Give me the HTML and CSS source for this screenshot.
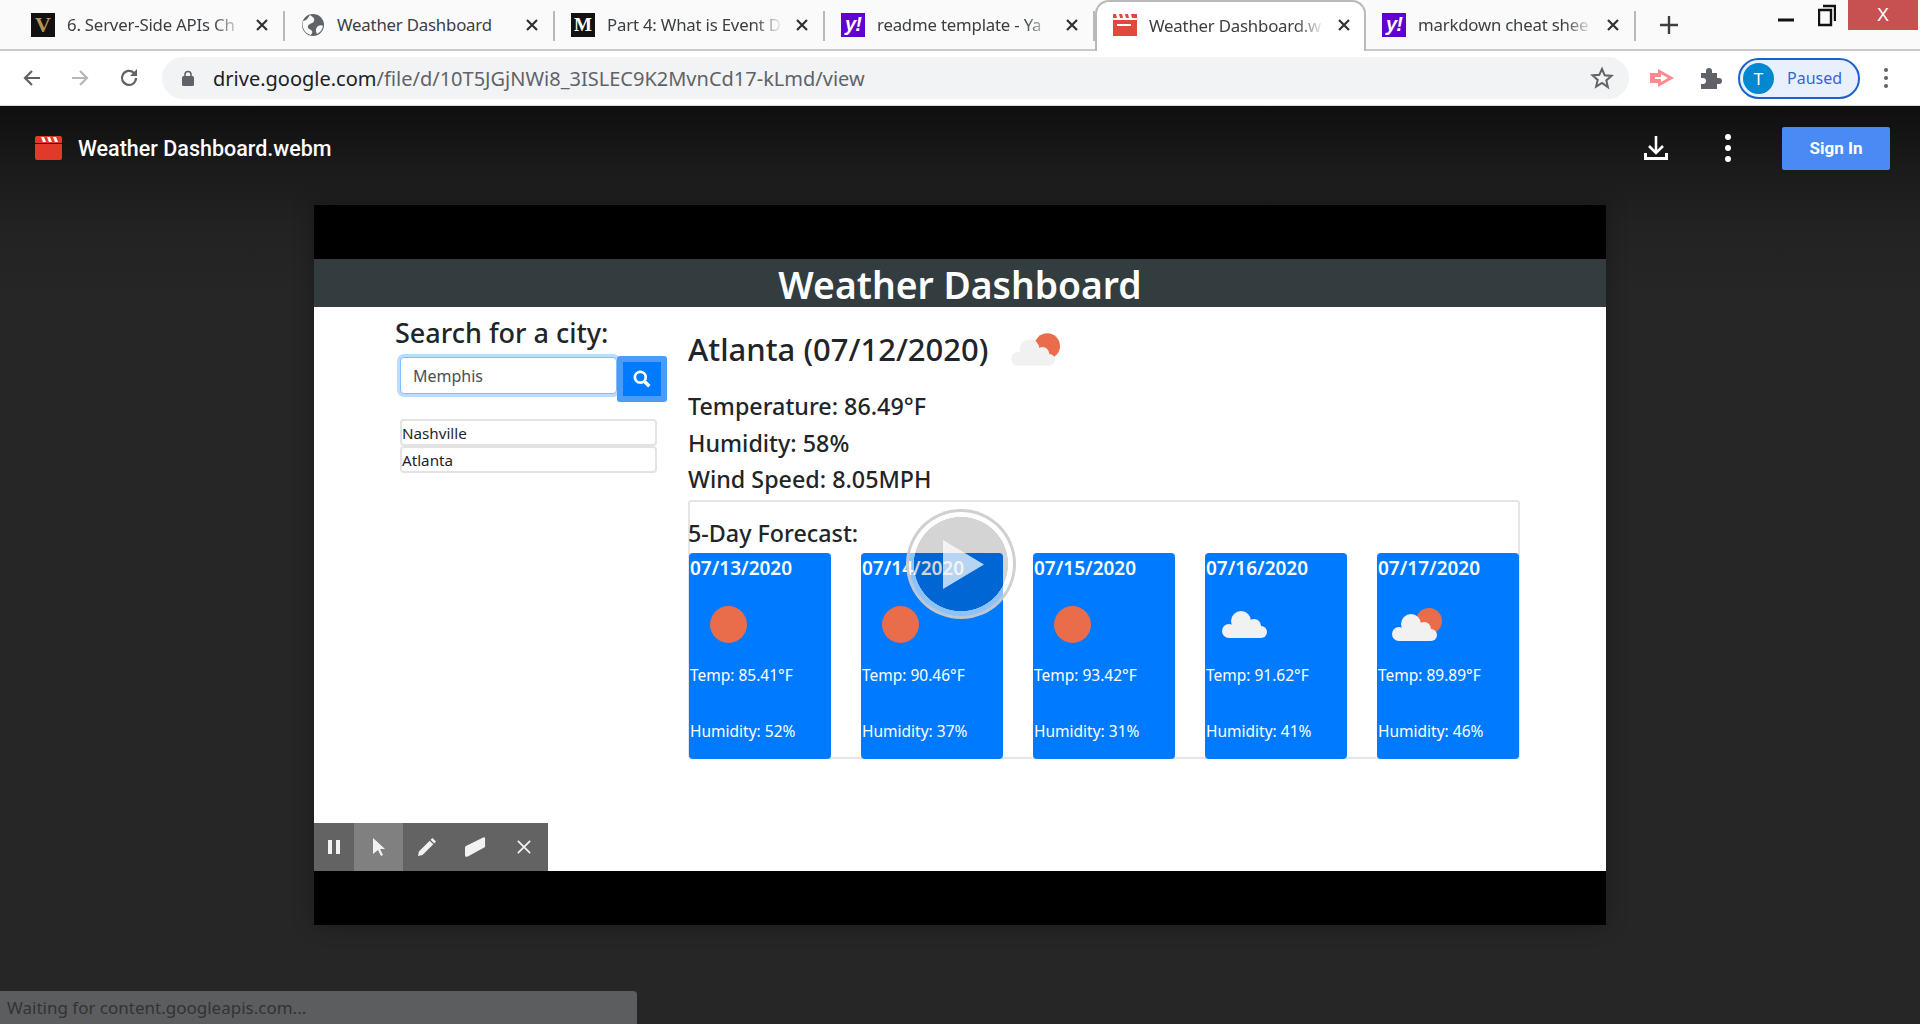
FILE: index.html
```html
<!DOCTYPE html>
<html lang="en">
<head>
<meta charset="UTF-8">
<meta name="viewport" content="width=device-width, initial-scale=1.0">
<title>Weather Dashboard.webm</title>
<link rel="stylesheet" href="styles.css">
</head>
<body>

<svg class="defs" width="0" height="0">
    <symbol id="cloud" viewBox="0 0 45 27">
        <circle cx="19" cy="10" r="10"/>
        <circle cx="32" cy="15" r="7"/>
        <circle cx="7" cy="20" r="7"/>
        <circle cx="39" cy="21" r="6"/>
        <path d="M7 14h32v13H7z"/>
    </symbol>
    <symbol id="clapper" viewBox="0 0 27 24">
        <path d="M2 0h23a2 2 0 0 1 2 2v5H0V2a2 2 0 0 1 2-2zM0 8h27v14a2 2 0 0 1-2 2H2a2 2 0 0 1-2-2z" fill="#e13a2b"/>
        <path d="M6 1h3l2 5H8zM12 1h3l2 5h-3zM18 1h3l2 5h-3z" fill="#fff"/>
    </symbol>
    <symbol id="tab-x" viewBox="0 0 14 14">
        <path d="M2 2l10 10M12 2L2 12" stroke="#2f3133" stroke-width="2.2" fill="none"/>
    </symbol>
</svg>

<div class="tabstrip">
    <div class="tab">
        <span class="fav fav-v">V</span>
        <span class="tab-title">6. Server-Side APIs Ch</span>
        <svg class="tab-close"><use href="#tab-x"/></svg>
    </div>
    <div class="tab">
        <svg class="fav-globe" viewBox="0 0 24 24">
            <circle cx="12" cy="12" r="11" fill="#5f6368"/>
            <path d="M9 2c3 2 5 3 4 6s-5 2-6 5 3 3 4 5-1 3-1 4A11 11 0 0 1 2 8c3 0 5-3 7-6zM17 13c2-1 4-1 5 0a11 11 0 0 1-6 8c-2-3-1-6 1-8z" fill="#fafafa"/>
        </svg>
        <span class="tab-title tab-title-full">Weather Dashboard</span>
        <svg class="tab-close"><use href="#tab-x"/></svg>
    </div>
    <div class="tab">
        <span class="fav fav-m">M</span>
        <span class="tab-title">Part 4: What is Event D</span>
        <svg class="tab-close"><use href="#tab-x"/></svg>
    </div>
    <div class="tab">
        <span class="fav fav-y">y!</span>
        <span class="tab-title">readme template - Ya</span>
        <svg class="tab-close"><use href="#tab-x"/></svg>
    </div>
    <div class="tab tab-active">
        <svg class="fav-clapper" viewBox="0 0 24 22">
            <path d="M0 0h24v4H0zM0 6h24v16H0z" fill="#e04a39"/>
            <path d="M3 0h3l1 4H4zM9 0h3l1 4h-3zM15 0h3l1 4h-3zM4 10h14v2H4z" fill="#fff"/>
        </svg>
        <span class="tab-title">Weather Dashboard.w</span>
        <svg class="tab-close"><use href="#tab-x"/></svg>
    </div>
    <div class="tab">
        <span class="fav fav-y">y!</span>
        <span class="tab-title">markdown cheat shee</span>
        <svg class="tab-close"><use href="#tab-x"/></svg>
    </div>
    <svg class="new-tab" viewBox="0 0 18 18"><path d="M9 0v18M0 9h18" stroke="#3c4043" stroke-width="2.4"/></svg>
    <div class="win-controls">
        <svg class="win-min" viewBox="0 0 16 16"><path d="M0 8h16" stroke="#111" stroke-width="3"/></svg>
        <svg class="win-max" viewBox="0 0 18 24"><path d="M5 3h12v15M1 7h12v15H1z" stroke="#111" stroke-width="2.4" fill="none"/></svg>
        <div class="win-close">X</div>
    </div>
</div>

<div class="toolbar">
    <svg class="nav-icon" viewBox="0 0 20 20"><path d="M18 10H3M10 3l-7 7 7 7" stroke="#5f6368" stroke-width="2.2" fill="none"/></svg>
    <svg class="nav-icon" viewBox="0 0 20 20"><path d="M2 10h15M10 3l7 7-7 7" stroke="#b5b8bb" stroke-width="2.2" fill="none"/></svg>
    <svg class="nav-icon" viewBox="0 0 20 20"><path d="M17 10a7 7 0 1 1-2-5" stroke="#5f6368" stroke-width="2.2" fill="none"/><path d="M18 1v7h-7z" fill="#5f6368"/></svg>
    <div class="omnibox">
        <svg class="lock" viewBox="0 0 12 16"><path d="M3 7V4.500a3 3 0 0 1 6 0V7" stroke="#5f6368" stroke-width="1.600" fill="none"/><rect y="6" width="12" height="10" rx="1.500" fill="#5f6368"/></svg>
        <span class="url"><b>drive.google.com</b>/file/d/10T5JGjNWi8_3ISLEC9K2MvnCd17-kLmd/view</span>
        <svg class="star" viewBox="0 0 24 24"><path d="M12 3l2.700 6.300 6.800.6-5.200 4.500 1.600 6.700L12 17l-5.900 3.600 1.600-6.700-5.200-4.500 6.800-.6z" stroke="#5f6368" stroke-width="2" fill="none"/></svg>
    </div>
    <svg class="ext-cast" viewBox="0 0 24 18"><path d="M0 4h8V0l16 9-16 9v-4H0z" fill="#ff8a8f"/><path d="M11 5l7 4-7 4zM5 8h6v2H5z" fill="#fff"/></svg>
    <svg class="ext-puzzle" viewBox="0 0 24 24"><path d="M3 7h5V5a3 3 0 0 1 6 0v2h5v5h2a3 3 0 0 1 0 6h-2v5H3v-5h2a3 3 0 0 0 0-6H3z" fill="#5f6368"/></svg>
    <div class="profile">
        <span class="avatar">T</span>
        <span class="profile-label">Paused</span>
    </div>
    <div class="menu-dots"><i></i><i></i><i></i></div>
</div>

<div class="viewer">
    <header class="viewer-head">
        <svg class="file-icon"><use href="#clapper"/></svg>
        <span class="file-name">Weather Dashboard.webm</span>
        <svg class="download" viewBox="0 0 24 24"><path d="M12 0v16M5 10l7 7 7-7" stroke="#fff" stroke-width="2.600" fill="none"/><path d="M1.500 17v5.500h21V17" stroke="#fff" stroke-width="3" fill="none"/></svg>
        <div class="viewer-dots"><i></i><i></i><i></i></div>
        <button class="sign-in">Sign In</button>
    </header>

    <div class="stage">
        <div class="video">
            <div class="band"></div>
            <h1 class="app-title">Weather Dashboard</h1>
            <div class="app">
                <aside class="sidebar">
                    <h2>Search for a city:</h2>
                    <div class="search">
                        <div class="search-input">Memphis</div>
                        <div class="search-btn">
                            <svg viewBox="0 0 16 16"><circle cx="6.500" cy="6.500" r="4.800" stroke="#fff" stroke-width="2.400" fill="none"/><path d="M10 10l4.500 4.500" stroke="#fff" stroke-width="3"/></svg>
                        </div>
                    </div>
                    <ul class="history">
                        <li>Nashville</li>
                        <li>Atlanta</li>
                    </ul>
                </aside>
                <main class="current">
                    <div class="city-row">
                        <span class="city">Atlanta (07/12/2020)</span>
                        <svg class="city-icon" viewBox="0 0 50 33">
                            <circle cx="37" cy="13" r="13" fill="#e96c4b"/>
                            <use href="#cloud" y="6" width="45" height="27" fill="#f1f1f1"/>
                        </svg>
                    </div>
                    <p class="stat">Temperature: 86.49°F</p>
                    <p class="stat">Humidity: 58%</p>
                    <p class="stat">Wind Speed: 8.05MPH</p>
                    <section class="forecast">
                        <h3>5-Day Forecast:</h3>
                        <div class="cards">
                            <div class="card">
                                <div class="card-date">07/13/2020</div>
                                <div class="card-icon"><i class="sun"></i></div>
                                <div class="card-temp">Temp: 85.41°F</div>
                                <div class="card-hum">Humidity: 52%</div>
                            </div>
                            <div class="card">
                                <div class="card-date">07/14/2020</div>
                                <div class="card-icon"><i class="sun"></i></div>
                                <div class="card-temp">Temp: 90.46°F</div>
                                <div class="card-hum">Humidity: 37%</div>
                            </div>
                            <div class="card">
                                <div class="card-date">07/15/2020</div>
                                <div class="card-icon"><i class="sun"></i></div>
                                <div class="card-temp">Temp: 93.42°F</div>
                                <div class="card-hum">Humidity: 31%</div>
                            </div>
                            <div class="card">
                                <div class="card-date">07/16/2020</div>
                                <div class="card-icon"><svg class="cloud" fill="#f1f1f1"><use href="#cloud"/></svg></div>
                                <div class="card-temp">Temp: 91.62°F</div>
                                <div class="card-hum">Humidity: 41%</div>
                            </div>
                            <div class="card">
                                <div class="card-date">07/17/2020</div>
                                <div class="card-icon">
                                    <svg class="cloud-sun" viewBox="0 0 50 33">
                                        <circle cx="37" cy="13" r="13" fill="#e96c4b"/>
                                        <use href="#cloud" y="6" width="45" height="27" fill="#f1f1f1"/>
                                    </svg>
                                </div>
                                <div class="card-temp">Temp: 89.89°F</div>
                                <div class="card-hum">Humidity: 46%</div>
                            </div>
                        </div>
                    </section>
                </main>
            </div>
            <div class="band"></div>

            <div class="play">
                <svg viewBox="0 0 41 49"><path d="M0 0l41 24.500L0 49z" fill="#fff" fill-opacity=".72"/></svg>
            </div>

            <div class="draw-bar">
                <div class="draw-btn draw-pause"><svg viewBox="0 0 14 14"><path d="M1 0h4v14H1zM9 0h4v14H9z" fill="#f2f2f2"/></svg></div>
                <div class="draw-btn draw-arrow"><svg viewBox="0 0 14 18"><path d="M1 0l12 11H8l3 6-2 1-3-6-5 4z" fill="#f2f2f2"/></svg></div>
                <div class="draw-btn draw-pencil"><svg viewBox="0 0 20 20"><path d="M0 20l1-5L13 3l4 4L5 19zM14 2l2-2 4 4-2 2z" fill="#f2f2f2"/></svg></div>
                <div class="draw-btn"><svg viewBox="0 0 22 20"><path d="M1 9L19 0q2-.5 2 1v9L3 20q-3 1-3-1v-8q0-1.500 1-2z" fill="#f2f2f2"/></svg></div>
                <div class="draw-btn draw-x"><svg viewBox="0 0 16 16"><path d="M1 1l14 14M15 1L1 15" stroke="#f2f2f2" stroke-width="2"/></svg></div>
            </div>
        </div>
    </div>

    <div class="status">Waiting for content.googleapis.com...</div>
</div>

</body>
</html>
```

FILE: styles.css
```css
* {
    box-sizing: border-box;
}

html, body {
    margin: 0;
    height: 1024px;
    overflow: hidden;
}

body {
    display: flex;
    flex-direction: column;
    font-family: "Noto Sans", "Open Sans", sans-serif;
    background-color: #262626;
}

.defs {
    position: absolute;
}

/* browser tabs */
.tabstrip {
    display: flex;
    align-items: stretch;
    height: 51px;
    padding-left: 15px;
    background-color: #fafafa;
    border-bottom: 2px solid #c9c9c9;
}

.tab {
    display: flex;
    align-items: center;
    width: 270px;
    padding-left: 16px;
    position: relative;
    flex: none;
}

.tab::after {
    content: "";
    position: absolute;
    right: 0;
    top: 11px;
    height: 30px;
    width: 2px;
    background-color: #b9b9b9;
}

.tab-active {
    background-color: #fff;
    border: 2px solid #b9b9b9;
    border-bottom: none;
    border-radius: 14px 14px 0 0;
    margin-bottom: -2px;
    padding-left: 16px;
    padding-bottom: 3px;
    width: 271px;
}

.tab-active::after {
    display: none;
}

.fav {
    flex: none;
    width: 24px;
    height: 24px;
    margin-right: 12px;
    text-align: center;
    overflow: hidden;
}

.fav-v {
    background-color: #111;
    color: #b8935a;
    font: bold 22px/24px "Liberation Serif", serif;
}

.fav-m {
    background-color: #111;
    color: #fff;
    font: bold 19px/24px "Liberation Serif", serif;
}

.fav-y {
    background-color: #5f01d1;
    color: #fff;
    font: italic bold 20px/22px "Liberation Sans", sans-serif;
    letter-spacing: -1px;
}

.fav-globe {
    flex: none;
    width: 24px;
    height: 24px;
    margin-right: 12px;
}

.fav-clapper {
    flex: none;
    width: 24px;
    height: 22px;
    margin-right: 12px;
}

.tab-title {
    width: 179px;
    flex: none;
    font-size: 16.800px;
    letter-spacing: -0.200px;
    color: #3c4043;
    white-space: nowrap;
    -webkit-mask-image: linear-gradient(to right, #000 82%, transparent 98%);
    mask-image: linear-gradient(to right, #000 82%, transparent 98%);
}

.tab-title-full {
    -webkit-mask-image: none;
    mask-image: none;
}

.tab-close {
    flex: none;
    width: 14px;
    height: 14px;
    margin-left: 9px;
}

.new-tab {
    width: 18px;
    height: 18px;
    margin: 16px 0 0 24px;
}

.win-controls {
    display: flex;
    margin-left: auto;
    margin-right: 2px;
    align-items: flex-start;
}

.win-min {
    width: 16px;
    height: 16px;
    margin: 12px 24px 0 0;
}

.win-max {
    width: 18px;
    height: 24px;
    margin: 3px 12px 0 0;
}

.win-close {
    width: 70px;
    height: 30px;
    background-color: #c75050;
    color: #fff;
    text-align: center;
    font: 18px/30px "Liberation Sans", sans-serif;
}

/* address bar */
.toolbar {
    display: flex;
    align-items: center;
    height: 55px;
    padding-left: 22px;
    background-color: #fff;
    border-bottom: 1px solid #d8d8d8;
}

.nav-icon {
    width: 20px;
    height: 20px;
    margin-right: 28px;
    flex: none;
}

.nav-icon:nth-child(3) {
    margin-right: 0;
    margin-left: 1px;
}

.omnibox {
    display: flex;
    align-items: center;
    width: 1467px;
    height: 42px;
    margin-left: 23px;
    padding-left: 20px;
    border-radius: 21px;
    background-color: #f1f3f4;
}

.lock {
    width: 12px;
    height: 16px;
    margin-right: 19px;
}

.url {
    font-size: 20px;
    color: #5f6368;
    white-space: nowrap;
}

.url b {
    font-weight: 400;
    color: #202124;
}

.star {
    width: 24px;
    height: 24px;
    margin-left: auto;
    margin-right: 15px;
}

.ext-cast {
    width: 24px;
    height: 18px;
    margin-left: 21px;
}

.ext-puzzle {
    width: 24px;
    height: 24px;
    margin-left: 24px;
}

.profile {
    display: flex;
    align-items: center;
    width: 122px;
    height: 41px;
    margin-left: 16px;
    padding-left: 3px;
    border: 2px solid #1a62c9;
    border-radius: 21px;
    background-color: #e8f0fe;
}

.avatar {
    width: 31px;
    height: 31px;
    border-radius: 50%;
    background-color: #0288d1;
    color: #fff;
    text-align: center;
    font-size: 17px;
    line-height: 31px;
}

.profile-label {
    margin-left: 13px;
    font-size: 16px;
    color: #3367d6;
}

.menu-dots {
    display: flex;
    flex-direction: column;
    gap: 4px;
    margin-left: 24px;
}

.menu-dots i {
    width: 4px;
    height: 4px;
    border-radius: 50%;
    background-color: #5f6368;
}

/* drive viewer */
.viewer {
    flex: 1;
    position: relative;
    background: linear-gradient(to bottom, #0f0f0f, #1a1a1a 60px, #222 120px, #262626 190px);
}

.viewer-head {
    display: flex;
    align-items: center;
    height: 99px;
    padding: 0 30px 15px 35px;
}

.file-icon {
    width: 27px;
    height: 24px;
    margin-right: 16px;
}

.file-name {
    font: 500 21.500px Roboto, sans-serif;
    color: #fff;
}

.download {
    width: 24px;
    height: 24px;
    margin-left: auto;
}

.viewer-dots {
    display: flex;
    flex-direction: column;
    gap: 5px;
    margin-left: 57px;
}

.viewer-dots i {
    width: 6px;
    height: 6px;
    border-radius: 50%;
    background-color: #fff;
}

.sign-in {
    width: 108px;
    height: 43px;
    margin-left: 51px;
    border: none;
    border-radius: 2px;
    background-color: #4a8af4;
    color: #fff;
    font: 700 17px Roboto, sans-serif;
}

.stage {
    display: flex;
    justify-content: center;
}

.video {
    position: relative;
    width: 1292px;
    height: 720px;
    display: flex;
    flex-direction: column;
    background-color: #fff;
    box-shadow: 0 0 20px rgba(0, 0, 0, 0.3);
}

.band {
    height: 54px;
    background-color: #000;
}

.app-title {
    height: 48px;
    margin: 0;
    background-color: #333d40;
    color: #fff;
    text-align: center;
    font-size: 37.300px;
    font-weight: 600;
    line-height: 52px;
}

.app {
    display: flex;
    height: 564px;
    padding-left: 81px;
    color: #212529;
}

.sidebar {
    width: 293px;
    flex: none;
}

.sidebar h2 {
    margin: 7px 0 0;
    font-size: 27px;
    font-weight: 500;
    line-height: 38px;
}

.search {
    display: flex;
    align-items: flex-start;
    margin: 5px 0 0 5px;
}

.search-input {
    width: 217px;
    height: 37px;
    padding-left: 12px;
    border: 1px solid #80bdff;
    border-radius: 4px;
    box-shadow: 0 0 0 3px #bcdcfd;
    background-color: #fff;
    color: #495057;
    font-size: 16px;
    line-height: 37px;
}

.search-btn {
    display: flex;
    align-items: center;
    justify-content: center;
    width: 50px;
    height: 46px;
    margin-top: -1px;
    border: 6px solid #4c9bf7;
    border-radius: 3px;
    background-color: #007bff;
    position: relative;
}

.search-btn svg {
    width: 18px;
    height: 18px;
}

.history {
    list-style: none;
    margin: 17px 0 0 5px;
    padding: 0;
    width: 257px;
}

.history li {
    height: 27px;
    border: 2px solid #e3e3e3;
    border-radius: 4px;
    font-size: 15.200px;
    line-height: 24px;
}

.current {
    width: 832px;
    flex: none;
}

.city-row {
    display: flex;
    align-items: center;
    height: 58px;
    margin-top: 13px;
}

.city {
    font-size: 31px;
    font-weight: 500;
}

.city-icon {
    width: 49px;
    height: 33px;
    margin: 1px 0 0 23px;
}

.stat {
    margin: 0;
    height: 36.500px;
    font-size: 23.300px;
    font-weight: 500;
    line-height: 36.500px;
}

.stat:first-of-type {
    margin-top: 10px;
}

.forecast {
    height: 259px;
    margin-top: 2.500px;
    border: 2px solid #e5e5e5;
    border-radius: 3px;
}

.forecast h3 {
    margin: 0 0 0 -2px;
    padding-top: 14px;
    height: 51px;
    font-size: 23.300px;
    font-weight: 500;
    line-height: 34px;
}

.cards {
    display: flex;
    justify-content: space-between;
    margin: 0 -1px;
}

.card {
    width: 142px;
    height: 206px;
    padding-left: 1px;
    border-radius: 4px;
    background-color: #007bff;
    color: #fff;
    white-space: nowrap;
}

.card-date {
    height: 30px;
    font-size: 19px;
    font-weight: 600;
    line-height: 30px;
}

.card-icon {
    display: flex;
    align-items: center;
    height: 82px;
}

.sun {
    width: 37px;
    height: 37px;
    margin-left: 20px;
    border-radius: 50%;
    background-color: #e96c4b;
}

.cloud {
    width: 45px;
    height: 27px;
    margin: 0 0 0 16px;
}

.cloud-sun {
    width: 50px;
    height: 33px;
    margin: 0 0 0 14px;
}

.card-temp,
.card-hum {
    height: 20px;
    font-size: 15.500px;
    line-height: 20px;
}

.card-hum {
    margin-top: 36px;
}

/* overlays on the video */
.play {
    position: absolute;
    left: 592px;
    top: 304px;
    width: 110px;
    height: 110px;
    display: flex;
    align-items: center;
    justify-content: center;
    padding-left: 5px;
    border-radius: 50%;
    border: 3px solid rgba(200, 200, 200, 0.85);
    background: radial-gradient(circle closest-side, rgba(0, 0, 0, 0.17) 90%, rgba(255, 255, 255, 0.55) 91%);
}

.play svg {
    width: 41px;
    height: 49px;
}

.draw-bar {
    position: absolute;
    left: 0;
    bottom: 54px;
    display: flex;
    height: 48px;
    background-color: #636363;
}

.draw-btn {
    display: flex;
    align-items: center;
    justify-content: center;
    width: 48.300px;
    height: 48px;
}

.draw-btn svg {
    width: 21px;
    height: 20px;
}

.draw-pause {
    width: 40px;
}

.draw-pause svg {
    width: 14px;
    height: 14px;
}

.draw-arrow {
    width: 49px;
    background-color: #808080;
}

.draw-arrow svg {
    width: 14px;
    height: 18px;
}

.draw-pencil svg {
    width: 18px;
    height: 18px;
}

.draw-x svg {
    width: 14px;
    height: 14px;
}

.status {
    position: absolute;
    left: 0;
    bottom: 0;
    width: 637px;
    height: 33px;
    padding-left: 7px;
    border-radius: 0 4px 0 0;
    background-color: #5c5d5f;
    color: #333;
    font-size: 17px;
    line-height: 33px;
}
```
